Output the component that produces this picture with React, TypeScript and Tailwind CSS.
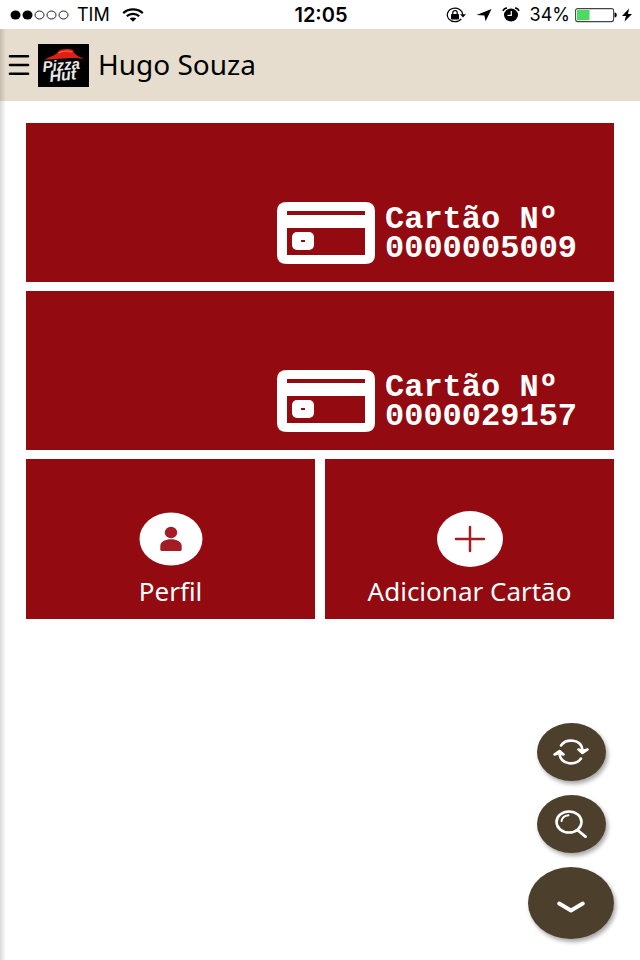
import type { ReactNode } from "react";

const cards = ["0000005009", "0000029157"];

function StatusBar() {
  return (
    <div className="grid h-[29px] grid-cols-[1fr_auto_1fr] items-center bg-white pr-2 pl-[10px] font-['Inter',sans-serif] text-[18px] leading-5 text-black">
      <div className="flex items-center gap-2">
        <svg className="h-3 w-[59px]" viewBox="0 0 59 12" aria-label="Sinal">
          <ellipse cx="5.5" cy="6" rx="5" ry="4.5" />
          <ellipse cx="17.5" cy="6" rx="5" ry="4.5" />
          <g fill="none" stroke="#222" strokeWidth="1">
            <ellipse cx="29.5" cy="6" rx="4.5" ry="4" />
            <ellipse cx="41.5" cy="6" rx="4.5" ry="4" />
            <ellipse cx="53.5" cy="6" rx="4.5" ry="4" />
          </g>
        </svg>
        <span>TIM</span>
        <svg className="ml-1 h-[14px] w-[22px]" viewBox="0 0 22 14" fill="none" stroke="#000" strokeWidth="2.3" aria-label="Wi-Fi">
          <path d="M1.2 5.1C6.5.2 15.5.2 20.8 5.1" />
          <path d="M4.8 8.1c3.5-3 8.900-3 12.400 0" />
          <path d="M7.700 10.600c2-1.500 4.600-1.500 6.600 0L11 13.700Z" fill="#000" stroke="none" />
        </svg>
      </div>
      <time className="text-[20px] font-semibold">12:05</time>
      <div className="flex items-center justify-end">
        <svg className="h-4 w-5" viewBox="0 0 20 16" aria-label="Rotação bloqueada">
          <path d="M15.300 11.800A7.700 6.800 0 1 1 16.700 7.500" fill="none" stroke="#000" strokeWidth="1.200" />
          <path d="M14 7.200h6l-3 3.300Z" />
          <rect x="5" y="7" width="8" height="5.500" rx=".8" />
          <path d="M6.800 7.500V5.500c0-2.500 4.400-2.500 4.400 0v2" fill="none" stroke="#000" strokeWidth="1.200" />
        </svg>
        <svg className="ml-[10px] h-[14px] w-4" viewBox="0 0 16 14" aria-label="Localização">
          <path d="M15.500 1 9.600 13.200 8.400 7.500.5 7Z" />
        </svg>
        <svg className="ml-[10px] h-[15px] w-[18px]" viewBox="0 0 18 15" aria-label="Alarme">
          <ellipse cx="9" cy="8" rx="7" ry="6.400" />
          <path d="M1 4C1.500 2.200 3 1.200 5 1M17 4C16.500 2.200 15 1.200 13 1" fill="none" stroke="#000" strokeWidth="1.500" />
          <path d="M9.300 4v4.400H5.500" fill="none" stroke="#fff" strokeWidth="1.200" />
        </svg>
        <span className="ml-[10px]">34%</span>
        <svg className="ml-[5px] h-4 w-[42px]" viewBox="0 0 42 16" aria-label="Bateria 34%">
          <rect x=".6" y="1.600" width="38" height="13" rx="2" fill="#fff" stroke="#444" strokeWidth="1.100" />
          <rect x="2" y="3" width="12.500" height="10.200" fill="#4cd964" />
          <path d="M39.500 5.500c3 0 3 5 0 5Z" />
        </svg>
        <svg className="ml-[5px] h-[14px] w-[10px]" viewBox="0 0 10 14" aria-label="Carregando">
          <path d="M7 .5 0 8h4L2.500 13.500 10 6H6Z" />
        </svg>
      </div>
    </div>
  );
}

function Logo() {
  return (
    <svg className="h-[43px] w-[51px] shrink-0" viewBox="0 0 51 43" aria-label="Pizza Hut">
      <rect width="51" height="43" />
      <path d="M6 15.500c4-2 9-3 13.500-6.500.5-2 2-3 4.500-3.500 3.500-.8 8-.8 11 .5l1 3c3 3 6.500 4 10 6.200-7-1.300-12-1.300-19-.8-8 .2-14 1.200-21 1.100Z" fill="#df2015" />
      <path d="M20 9c4-2 9-2.500 14-1" fill="none" stroke="#ff5547" strokeWidth="1.200" />
      <g fill="#e8e8e8" fontFamily="Liberation Sans, sans-serif" fontStyle="italic" fontWeight="700">
        <text x="5" y="28" fontSize="15" transform="rotate(-5 5 28)">Pizza</text>
        <text x="12" y="38" fontSize="16" transform="rotate(-6 12 38)">Hut</text>
      </g>
    </svg>
  );
}

function CardIcon() {
  return (
    <svg className="h-[62px] w-[98px] shrink-0" viewBox="0 0 98 62" aria-hidden="true">
      <path
        fill="#fff"
        fillRule="evenodd"
        d="M10 0H88Q98 0 98 9V53Q98 62 88 62H10Q0 62 0 53V9Q0 0 10 0ZM10 9V13H88V9ZM10 26V53H88V26Z"
      />
      <rect x="15" y="30" width="22" height="18" rx="5" fill="#fff" />
      <rect x="24" y="38" width="4" height="2" fill="#930a10" />
    </svg>
  );
}

function CardTile({ number }: { number: string }) {
  return (
    <button className="flex h-[159px] w-full items-end justify-end gap-[10px] bg-[#930a10] pr-[27px] pb-[18px] text-left text-white">
      <CardIcon />
      <span className="w-[202px] pb-px font-['Liberation_Mono',monospace] text-[32px] leading-[29px] font-bold">
        Cartão Nº
        <br />
        {number}
      </span>
    </button>
  );
}

function ActionTile({ label, children }: { label: string; children: ReactNode }) {
  return (
    <button className="flex h-[160px] flex-col items-center justify-end bg-[#930a10] pb-[14px] text-white">
      <span className="flex h-14 items-center">{children}</span>
      <span className="mt-[10px] text-[26px] leading-7">{label}</span>
    </button>
  );
}

export default function App() {
  return (
    <div className="min-h-screen bg-white font-['Noto_Sans',sans-serif] text-black">
      <StatusBar />
      <div className="relative min-h-[calc(100vh-29px)]">
        <header className="flex h-[72px] items-center bg-[#e6ddce] pl-2">
          <button aria-label="Menu" className="mr-2">
            <svg className="h-6 w-[22px]" viewBox="0 0 22 24" fill="none" stroke="#000" strokeWidth="2.600" strokeLinecap="round">
              <path d="M2 3.300h18M2 12h18M2 20.700h18" />
            </svg>
          </button>
          <Logo />
          <h1 className="ml-[9px] pb-[2px] text-[28px] leading-9">Hugo Souza</h1>
        </header>
        <main className="flex flex-col gap-[9px] px-[26px] pt-[22px]">
          {cards.map((number) => (
            <CardTile key={number} number={number} />
          ))}
          <div className="grid grid-cols-2 gap-[10px]">
            <ActionTile label="Perfil">
              <svg className="h-[54px] w-16" viewBox="0 0 64 54" aria-hidden="true">
                <ellipse cx="32" cy="27" rx="31.500" ry="26.500" fill="#fff" />
                <g fill="#a31c26">
                  <ellipse cx="32" cy="20.500" rx="6.200" ry="5.800" />
                  <path d="M21.300 37.500V34c0-9 21.400-9 21.400 0v3.500q0 1.500-1.700 1.500H23q-1.700 0-1.700-1.500Z" />
                </g>
              </svg>
            </ActionTile>
            <ActionTile label="Adicionar Cartão">
              <svg className="h-14 w-[66px]" viewBox="0 0 66 56" aria-hidden="true">
                <ellipse cx="33" cy="28" rx="33" ry="28" fill="#fff" />
                <path d="M19 28h28M33 16v24" fill="none" stroke="#a31c26" strokeWidth="2.500" strokeLinecap="round" />
              </svg>
            </ActionTile>
          </div>
        </main>
        <div className="pointer-events-none absolute inset-y-0 left-0 w-[6px] bg-linear-to-r from-black/15 to-transparent" />
      </div>
      <div className="fixed right-[26px] bottom-[21px] flex flex-col items-center gap-[14px] text-white">
        <button aria-label="Atualizar" className="flex h-[58px] w-[69px] items-center justify-center rounded-[50%] bg-[#4c3f2c] shadow-[2px_3px_4px_rgba(0,0,0,0.35)]">
          <svg className="h-[26px] w-9" viewBox="0 0 36 26" fill="none" stroke="currentColor" strokeWidth="2.600" strokeLinecap="round" strokeLinejoin="round">
            <path d="M8 6.500C13-.5 28-.5 29.500 11M28 19.500C23 26.500 8 26.500 6.500 15" />
            <path d="M25.500 10.500 29.500 14l5-3.500-5 1.500ZM1.500 15.500l5-3.500 4 3.500-4-1.500Z" fill="currentColor" />
          </svg>
        </button>
        <button aria-label="Buscar" className="flex h-[58px] w-[69px] items-center justify-center rounded-[50%] bg-[#4c3f2c] shadow-[2px_3px_4px_rgba(0,0,0,0.35)]">
          <svg className="h-7 w-8" viewBox="0 0 32 28" fill="none" stroke="currentColor" strokeLinecap="round">
            <ellipse cx="14" cy="12" rx="12.500" ry="10.500" strokeWidth="2.600" />
            <path d="M23 20.500l7.500 6.200" strokeWidth="2.800" />
            <path d="M6.500 11c.5-3 3-5.300 7-5.700" strokeWidth="2" />
          </svg>
        </button>
        <button aria-label="Expandir" className="flex h-[72px] w-[86px] items-center justify-center rounded-[50%] bg-[#4c3f2c] pt-2 shadow-[2px_3px_4px_rgba(0,0,0,0.35)]">
          <svg className="h-3 w-7" viewBox="0 0 28 12" fill="none" stroke="currentColor" strokeWidth="3.800" strokeLinecap="round" strokeLinejoin="round">
            <path d="M2.200 2.500 14 9.500 25.800 2.500" />
          </svg>
        </button>
      </div>
    </div>
  );
}
